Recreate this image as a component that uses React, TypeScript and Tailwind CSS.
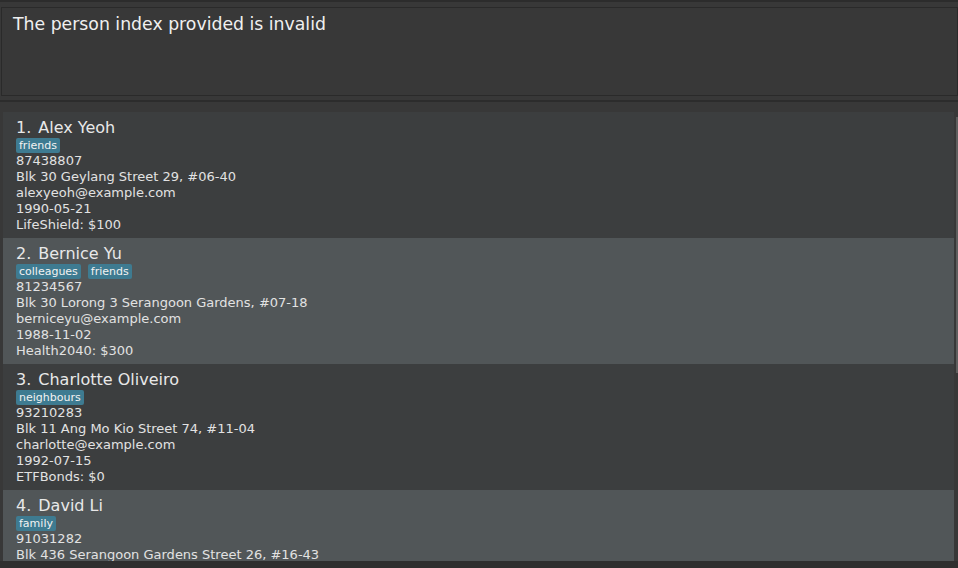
import React from "react";

interface Person {
    name: string;
    tags: string[];
    phone: string;
    address: string;
    email?: string;
    birthday?: string;
    policy?: string;
}

// last entry is only partly in view, so just the fields that show
const persons: Person[] = [
    {
        name: "Alex Yeoh",
        tags: ["friends"],
        phone: "87438807",
        address: "Blk 30 Geylang Street 29, #06-40",
        email: "alexyeoh@example.com",
        birthday: "1990-05-21",
        policy: "LifeShield: $100",
    },
    {
        name: "Bernice Yu",
        tags: ["colleagues", "friends"],
        phone: "81234567",
        address: "Blk 30 Lorong 3 Serangoon Gardens, #07-18",
        email: "berniceyu@example.com",
        birthday: "1988-11-02",
        policy: "Health2040: $300",
    },
    {
        name: "Charlotte Oliveiro",
        tags: ["neighbours"],
        phone: "93210283",
        address: "Blk 11 Ang Mo Kio Street 74, #11-04",
        email: "charlotte@example.com",
        birthday: "1992-07-15",
        policy: "ETFBonds: $0",
    },
    {
        name: "David Li",
        tags: ["family"],
        phone: "91031282",
        address: "Blk 436 Serangoon Gardens Street 26, #16-43",
    },
];

function PersonCard({ person, index }: { person: Person; index: number }) {
    const even = index % 2 === 1;
    return (
        <div
            className={
                "h-[126px] shrink-0 pt-[6px] pl-[13px] pb-[5px] " +
                (even ? "bg-[#515658]" : "bg-[#3c3e3f]")
            }
        >
            <div className="flex h-[19px] text-[16px] leading-[19px] text-[#e8e8e8] whitespace-nowrap">
                <span className="pr-[7px]">{index + 1}.</span>
                <span>{person.name}</span>
            </div>
            <div className="mt-px flex h-[15px] gap-[7px]">
                {person.tags.map((tag) => (
                    <span
                        key={tag}
                        className="rounded-[2px] bg-[#3e7b91] px-[3px] text-[11px] leading-[15px] text-[#f2f2f2]"
                    >
                        {tag}
                    </span>
                ))}
            </div>
            <div className="text-[13px] leading-4 text-[#e2e2e2] whitespace-nowrap">
                <div>{person.phone}</div>
                <div>{person.address}</div>
                {person.email && <div>{person.email}</div>}
                {person.birthday && <div>{person.birthday}</div>}
                {person.policy && <div>{person.policy}</div>}
            </div>
        </div>
    );
}

export default function App() {
    return (
        <div
            className="flex h-[568px] w-[958px] flex-col overflow-hidden bg-[#383838]"
            style={{ fontFamily: '"DejaVu Sans", "Liberation Sans", sans-serif' }}
        >
            {/* top strip */}
            <div className="h-[2px] shrink-0 bg-[#2c2c2c]" />
            <div className="h-[5px] shrink-0" />

            {/* result display */}
            <div className="ml-px h-[89px] shrink-0 border border-[#2a2a2a] bg-[#383838] pt-[6px] pl-[11px]">
                <p className="text-[17.3px] leading-[20px] text-[#f0f0f0]">
                    The person index provided is invalid
                </p>
            </div>

            <div className="h-[4px] shrink-0" />
            <div className="h-[2px] shrink-0 bg-[#2c2c2c]" />

            {/* person list */}
            <div className="flex h-[459px] shrink-0 pt-[10px] pl-[3px]">
                <div className="flex h-[449px] w-[951px] flex-col overflow-hidden">
                    {persons.map((p, i) => (
                        <PersonCard key={p.name} person={p} index={i} />
                    ))}
                </div>
                <div className="ml-[2px] w-[2px]">
                    <div className="mt-[5px] h-[256px] bg-[#5e5e5e]" />
                </div>
            </div>

            <div className="flex-1 bg-[#2f2f2f]" />
        </div>
    );
}
